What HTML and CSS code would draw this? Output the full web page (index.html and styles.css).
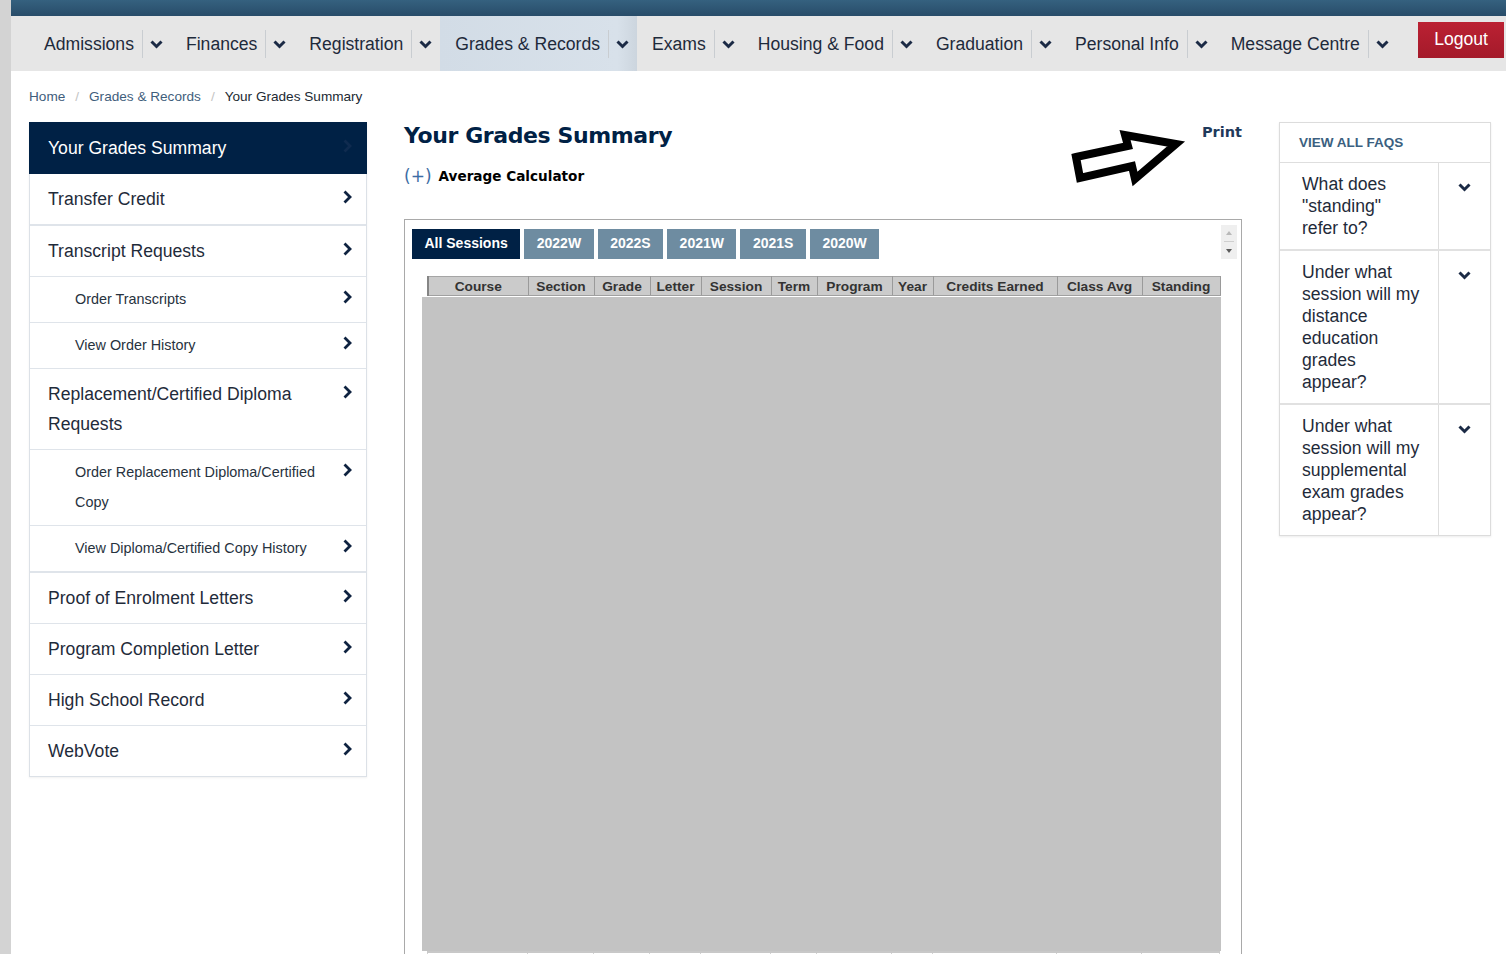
FILE: index.html
```html
<!DOCTYPE html>
<html lang="en">
<head>
<meta charset="utf-8">
<title>Your Grades Summary</title>
<link rel="stylesheet" href="styles.css">
</head>
<body>
<div class="shell">
  <div class="edge"></div>
  <div class="page">
    <div class="topbar"></div>
    <nav class="nav">
      <div class="nav-item"><span class="nav-label">Admissions</span><span class="nav-caret"><svg width="13" height="9" viewBox="0 0 13 9"><polyline points="1.5,1.5 6.5,6.5 11.5,1.5"/></svg></span></div>
      <div class="nav-item"><span class="nav-label">Finances</span><span class="nav-caret"><svg width="13" height="9" viewBox="0 0 13 9"><polyline points="1.5,1.5 6.5,6.5 11.5,1.5"/></svg></span></div>
      <div class="nav-item"><span class="nav-label">Registration</span><span class="nav-caret"><svg width="13" height="9" viewBox="0 0 13 9"><polyline points="1.5,1.5 6.5,6.5 11.5,1.5"/></svg></span></div>
      <div class="nav-item active"><span class="nav-label">Grades &amp; Records</span><span class="nav-caret"><svg width="13" height="9" viewBox="0 0 13 9"><polyline points="1.5,1.5 6.5,6.5 11.5,1.5"/></svg></span></div>
      <div class="nav-item"><span class="nav-label">Exams</span><span class="nav-caret"><svg width="13" height="9" viewBox="0 0 13 9"><polyline points="1.5,1.5 6.5,6.5 11.5,1.5"/></svg></span></div>
      <div class="nav-item"><span class="nav-label">Housing &amp; Food</span><span class="nav-caret"><svg width="13" height="9" viewBox="0 0 13 9"><polyline points="1.5,1.5 6.5,6.5 11.5,1.5"/></svg></span></div>
      <div class="nav-item"><span class="nav-label">Graduation</span><span class="nav-caret"><svg width="13" height="9" viewBox="0 0 13 9"><polyline points="1.5,1.5 6.5,6.5 11.5,1.5"/></svg></span></div>
      <div class="nav-item"><span class="nav-label">Personal Info</span><span class="nav-caret"><svg width="13" height="9" viewBox="0 0 13 9"><polyline points="1.5,1.5 6.5,6.5 11.5,1.5"/></svg></span></div>
      <div class="nav-item"><span class="nav-label">Message Centre</span><span class="nav-caret"><svg width="13" height="9" viewBox="0 0 13 9"><polyline points="1.5,1.5 6.5,6.5 11.5,1.5"/></svg></span></div>
      <a class="logout">Logout</a>
    </nav>

    <div class="crumbs">
      <a class="crumb-link">Home</a><span class="crumb-sep">/</span><a class="crumb-link">Grades &amp; Records</a><span class="crumb-sep">/</span><span class="crumb-current">Your Grades Summary</span>
    </div>

    <div class="layout">
      <aside class="side">
        <a class="side-row lvl1 current"><span class="side-text">Your Grades Summary</span><svg class="chev" width="9" height="14" viewBox="0 0 9 14"><polyline points="1.5,1.5 7,7 1.5,12.5"/></svg></a>
        <a class="side-row lvl1 group-end"><span class="side-text">Transfer Credit</span><svg class="chev" width="9" height="14" viewBox="0 0 9 14"><polyline points="1.5,1.5 7,7 1.5,12.5"/></svg></a>
        <a class="side-row lvl1"><span class="side-text">Transcript Requests</span><svg class="chev" width="9" height="14" viewBox="0 0 9 14"><polyline points="1.5,1.5 7,7 1.5,12.5"/></svg></a>
        <a class="side-row lvl2"><span class="side-text">Order Transcripts</span><svg class="chev" width="9" height="14" viewBox="0 0 9 14"><polyline points="1.5,1.5 7,7 1.5,12.5"/></svg></a>
        <a class="side-row lvl2"><span class="side-text">View Order History</span><svg class="chev" width="9" height="14" viewBox="0 0 9 14"><polyline points="1.5,1.5 7,7 1.5,12.5"/></svg></a>
        <a class="side-row lvl1"><span class="side-text">Replacement/Certified Diploma Requests</span><svg class="chev" width="9" height="14" viewBox="0 0 9 14"><polyline points="1.5,1.5 7,7 1.5,12.5"/></svg></a>
        <a class="side-row lvl2"><span class="side-text">Order Replacement Diploma/Certified Copy</span><svg class="chev" width="9" height="14" viewBox="0 0 9 14"><polyline points="1.5,1.5 7,7 1.5,12.5"/></svg></a>
        <a class="side-row lvl2 group-end"><span class="side-text">View Diploma/Certified Copy History</span><svg class="chev" width="9" height="14" viewBox="0 0 9 14"><polyline points="1.5,1.5 7,7 1.5,12.5"/></svg></a>
        <a class="side-row lvl1"><span class="side-text">Proof of Enrolment Letters</span><svg class="chev" width="9" height="14" viewBox="0 0 9 14"><polyline points="1.5,1.5 7,7 1.5,12.5"/></svg></a>
        <a class="side-row lvl1"><span class="side-text">Program Completion Letter</span><svg class="chev" width="9" height="14" viewBox="0 0 9 14"><polyline points="1.5,1.5 7,7 1.5,12.5"/></svg></a>
        <a class="side-row lvl1"><span class="side-text">High School Record</span><svg class="chev" width="9" height="14" viewBox="0 0 9 14"><polyline points="1.5,1.5 7,7 1.5,12.5"/></svg></a>
        <a class="side-row lvl1 last"><span class="side-text">WebVote</span><svg class="chev" width="9" height="14" viewBox="0 0 9 14"><polyline points="1.5,1.5 7,7 1.5,12.5"/></svg></a>
      </aside>

      <main class="main">
        <div class="main-head">
          <h1 class="title">Your Grades Summary</h1>
          <a class="print">Print</a>
          <svg class="arrow" width="120" height="62" viewBox="0 0 120 62"><polygon points="8,31 60,20 57,9 108,18 67,53 64,40 12,52"/></svg>
        </div>
        <div class="calc"><span class="calc-plus">(+)</span><span class="calc-label">Average Calculator</span></div>

        <div class="grades-box">
          <div class="tabs-row">
            <div class="tabs">
              <a class="tab selected">All Sessions</a>
              <a class="tab">2022W</a>
              <a class="tab">2022S</a>
              <a class="tab">2021W</a>
              <a class="tab">2021S</a>
              <a class="tab">2020W</a>
            </div>
            <div class="scroller">
              <svg width="16" height="34" viewBox="0 0 16 34"><polygon class="up" points="5,10 11,10 8,6"/><line x1="3" y1="16.5" x2="13" y2="16.5"/><polygon class="down" points="5,24 11,24 8,28"/></svg>
            </div>
          </div>
          <div class="grid-wrap">
            <table class="grid">
              <colgroup>
                <col style="width:100px"><col style="width:66px"><col style="width:56px"><col style="width:51px"><col style="width:70px"><col style="width:46px"><col style="width:75px"><col style="width:41px"><col style="width:124px"><col style="width:85px"><col style="width:78px">
              </colgroup>
              <thead>
                <tr><th>Course</th><th>Section</th><th>Grade</th><th>Letter</th><th>Session</th><th>Term</th><th>Program</th><th>Year</th><th>Credits Earned</th><th>Class Avg</th><th>Standing</th></tr>
              </thead>
            </table>
            <div class="overlay"></div>
            <table class="grid grid-tail">
              <colgroup>
                <col style="width:100px"><col style="width:66px"><col style="width:56px"><col style="width:51px"><col style="width:70px"><col style="width:46px"><col style="width:75px"><col style="width:41px"><col style="width:124px"><col style="width:85px"><col style="width:78px">
              </colgroup>
              <tbody><tr><td></td><td></td><td></td><td></td><td></td><td></td><td></td><td></td><td></td><td></td><td></td></tr></tbody>
            </table>
          </div>
        </div>
      </main>

      <aside class="faq">
        <div class="faq-head">VIEW ALL FAQS</div>
        <div class="faq-row">
          <div class="faq-q">What does "standing" refer to?</div>
          <div class="faq-toggle"><svg width="13" height="9" viewBox="0 0 13 9"><polyline points="1.5,1.5 6.5,6.5 11.5,1.5"/></svg></div>
        </div>
        <div class="faq-row">
          <div class="faq-q">Under what session will my distance education grades appear?</div>
          <div class="faq-toggle"><svg width="13" height="9" viewBox="0 0 13 9"><polyline points="1.5,1.5 6.5,6.5 11.5,1.5"/></svg></div>
        </div>
        <div class="faq-row">
          <div class="faq-q">Under what session will my supplemental exam grades appear?</div>
          <div class="faq-toggle"><svg width="13" height="9" viewBox="0 0 13 9"><polyline points="1.5,1.5 6.5,6.5 11.5,1.5"/></svg></div>
        </div>
      </aside>
    </div>
  </div>
</div>
</body>
</html>
```

FILE: styles.css
```css
html, body {
  margin: 0;
  padding: 0;
  height: 954px;
  overflow: hidden;
  background: #ffffff;
}

body {
  font-family: "Liberation Sans", Arial, sans-serif;
  color: #1f2b3a;
}

a { text-decoration: none; color: inherit; }

.shell {
  display: flex;
  min-height: 954px;
}

.edge {
  flex: none;
  width: 11px;
  background: #d3d3d3;
}

.page {
  flex: 1;
  min-width: 0;
}

.topbar {
  height: 16px;
  background: linear-gradient(#35617f, #284c69);
}

/* ---------- top navigation ---------- */
.nav {
  height: 55px;
  background: #e6e6e6;
  display: flex;
  align-items: stretch;
  padding-left: 18px;
}

.nav-item {
  display: flex;
  align-items: center;
  padding: 1px 8px 0 15px;
  font-size: 17.6px;
  color: #1e2a3b;
}

.nav-item.active {
  background: linear-gradient(90deg, #d2dce6 0%, #d8e1ea 90%, #ccd5de 100%);
}

.nav-label {
  padding-right: 8px;
}

.nav-caret {
  display: flex;
  align-items: center;
  height: 28px;
  padding-left: 7px;
  border-left: 1px solid #c9cdd1;
}

.nav-caret svg polyline,
.faq-toggle svg polyline {
  fill: none;
  stroke: #1b2a45;
  stroke-width: 3;
}

.logout {
  align-self: flex-start;
  margin: 6px 2px 0 auto;
  height: 36px;
  line-height: 34px;
  padding: 0 16px;
  font-size: 17.6px;
  color: #ffffff;
  background: linear-gradient(#bb2133, #a41a2a);
}

/* ---------- breadcrumbs ---------- */
.crumbs {
  height: 51px;
  box-sizing: border-box;
  padding: 16px 0 0 18px;
  font-size: 13.6px;
  line-height: 20px;
}

.crumb-link { color: #3f5e7c; }
.crumb-sep { color: #c4c4c4; padding: 0 10px; }
.crumb-current { color: #222a33; }

/* ---------- three columns ---------- */
.layout {
  display: grid;
  grid-template-columns: 338px 838px 212px;
  column-gap: 37px;
  padding-left: 18px;
  align-items: start;
}

/* ---------- sidebar ---------- */
.side {
  display: flex;
  flex-direction: column;
  border: 1px solid #dce1e7;
  border-top: none;
  box-shadow: 0 1px 2px rgba(0, 0, 0, 0.06);
}

.side-row {
  display: flex;
  justify-content: space-between;
  align-items: flex-start;
  gap: 10px;
  line-height: 30px;
  border-bottom: 1px solid #dfe4ea;
  color: #1f2b3a;
}

.side-row.lvl1 {
  padding: 10px 14px 10px 18px;
  font-size: 17.6px;
}

.side-row.lvl2 {
  padding: 7px 14px 8px 45px;
  font-size: 14.4px;
  color: #27323e;
}

.side-row.current {
  padding-top: 11px;
  padding-bottom: 11px;
  margin: 0 -1px;
  padding-left: 19px;
  padding-right: 15px;
  background: #002145;
  color: #ffffff;
  border-bottom: none;
}

.side-row.group-end { border-bottom-width: 2px; }
.side-row.last { border-bottom: none; }

.chev {
  flex: none;
  margin-top: 6px;
}

.chev polyline {
  fill: none;
  stroke: #0e2240;
  stroke-width: 2.8;
}

.side-row.current .chev polyline { stroke: #0f2b4f; }

/* ---------- main ---------- */
.main-head {
  position: relative;
  display: flex;
  justify-content: space-between;
  align-items: flex-start;
}

.title {
  margin: 0;
  font-family: "DejaVu Sans", Verdana, sans-serif;
  font-weight: bold;
  font-size: 22px;
  line-height: 28px;
  letter-spacing: -0.4px;
  color: #002145;
}

.print {
  margin-top: 0;
  font-family: "DejaVu Sans", Verdana, sans-serif;
  font-weight: bold;
  font-size: 14.5px;
  line-height: 20px;
  color: #1f3a5b;
}

.arrow {
  position: absolute;
  left: 664px;
  top: 4px;
}

.arrow polygon {
  fill: #ffffff;
  stroke: #000000;
  stroke-width: 8;
  stroke-linejoin: miter;
  stroke-miterlimit: 3;
}

.calc {
  margin-top: 13px;
  height: 26px;
  display: flex;
  align-items: center;
  gap: 7px;
  font-family: "DejaVu Sans", Verdana, sans-serif;
}

.calc-plus {
  font-size: 17px;
  color: #3c6ca4;
}

.calc-label {
  font-size: 13.6px;
  font-weight: bold;
  color: #000000;
}

.grades-box {
  margin-top: 30px;
  height: 760px;
  border: 1px solid #a9a9a9;
  border-bottom: none;
}

.tabs-row {
  display: flex;
  align-items: flex-start;
  padding: 9px 4px 0 7px;
}

.tabs {
  display: flex;
  gap: 4px;
}

.tab {
  height: 30px;
  line-height: 29px;
  padding: 0 12.5px;
  font-size: 14px;
  font-weight: bold;
  color: #ffffff;
  background: #6e8ca1;
}

.tab.selected {
  background: #002145;
}

.scroller {
  margin: -4px 0 0 auto;
  width: 16px;
  height: 34px;
  background: #efefef;
}

.scroller svg { display: block; }
.scroller .up { fill: #b9b9b9; }
.scroller .down { fill: #5a5a5a; }
.scroller line { stroke: #cfcfcf; stroke-width: 1; }

.grid-wrap {
  margin-top: 17px;
  padding-left: 17px;
}

.grid {
  margin-left: 5px;
  width: 792px;
  table-layout: fixed;
  border-collapse: collapse;
}

.grid th {
  height: 18px;
  padding: 0;
  background: #cbcbcb;
  border-top: 1px solid #a5a5a5;
  border-bottom: 1px solid #a0a0a0;
  border-right: 1px solid #9a9a9a;
  font-size: 13.7px;
  font-weight: bold;
  color: #333333;
  text-align: center;
  white-space: nowrap;
}

.grid th:first-child { border-left: 2px solid #858585; }

.overlay {
  margin-top: 1px;
  width: 799px;
  height: 654px;
  background: #c3c3c3;
}

.grid-tail td {
  height: 20px;
  padding: 0;
  border-top: 2px solid #c8c8c8;
  border-right: 1px solid #d2d2d2;
}

.grid-tail td:first-child { border-left: 1px solid #d2d2d2; }

/* ---------- FAQ ---------- */
.faq {
  border: 1px solid #dcdcdc;
  box-shadow: 0 1px 2px rgba(0, 0, 0, 0.08);
}

.faq-head {
  height: 39px;
  line-height: 40px;
  padding-left: 19px;
  font-size: 13.5px;
  font-weight: bold;
  color: #3b5f80;
  border-bottom: 1px solid #dedede;
}

.faq-row {
  display: flex;
  border-bottom: 2px solid #e1e1e1;
}

.faq-row:last-child { border-bottom: none; }

.faq-q {
  flex: 1;
  padding: 10px 18px 10px 22px;
  font-size: 17.6px;
  line-height: 22px;
  color: #1f2b3a;
}

.faq-toggle {
  flex: none;
  width: 51px;
  border-left: 1px solid #dedede;
  display: flex;
  justify-content: center;
  align-items: flex-start;
  padding-top: 20px;
}

.faq-toggle svg { display: block; }
```
